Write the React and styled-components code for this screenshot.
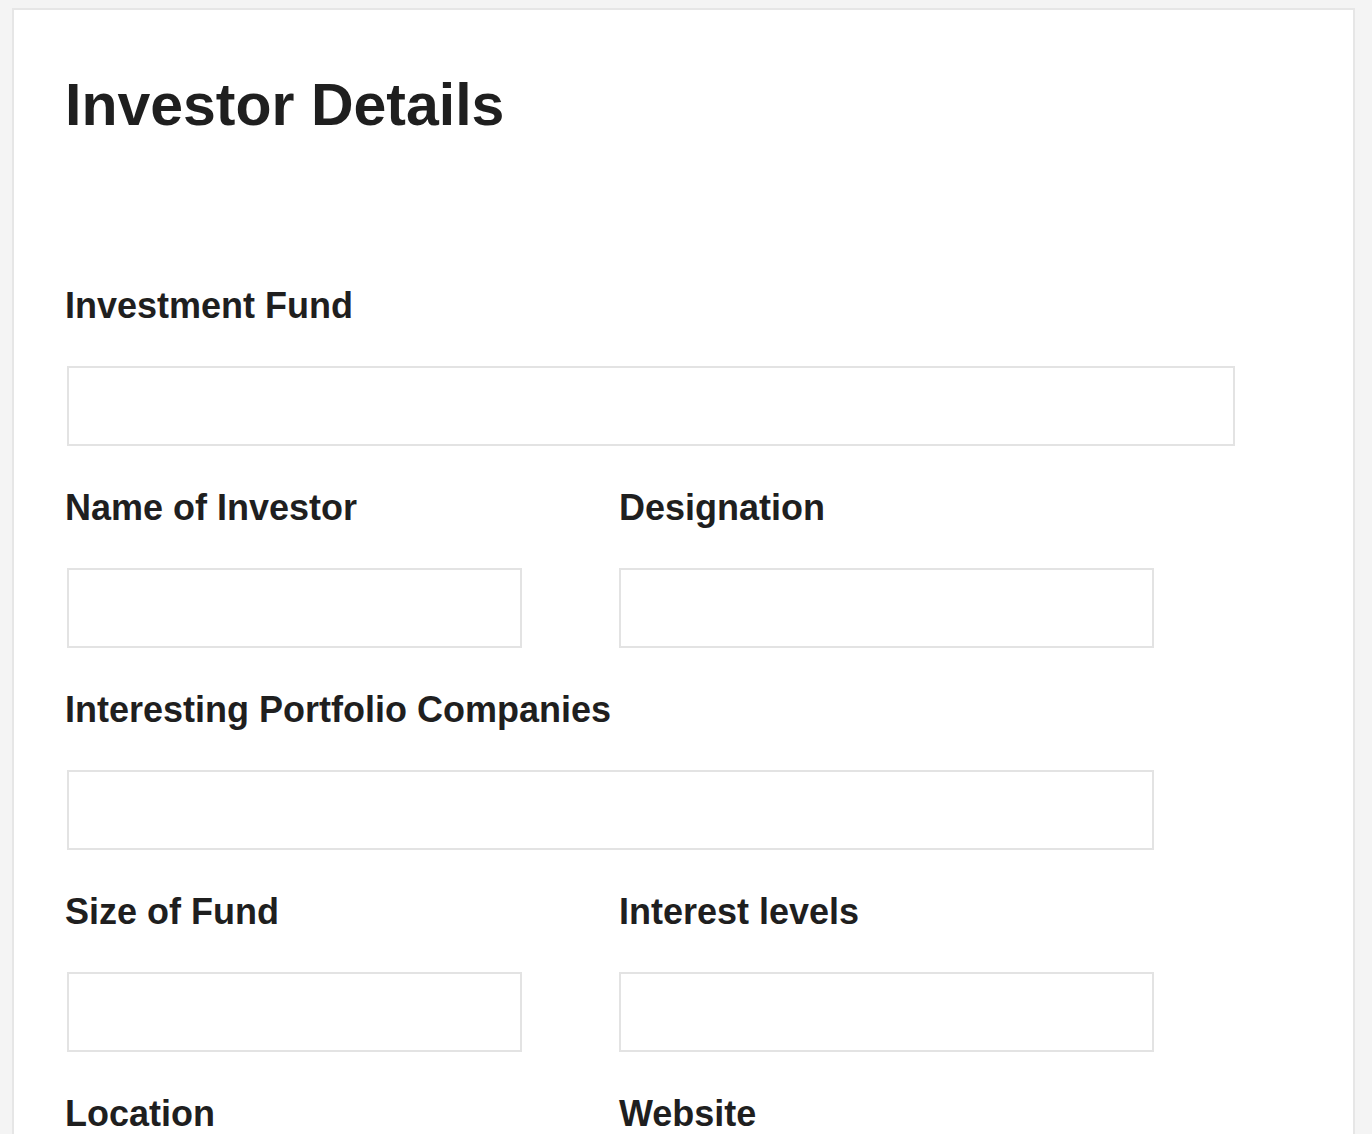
import React from 'react'
import styled, { createGlobalStyle } from 'styled-components'

const GlobalStyle = createGlobalStyle`
  html, body {
    margin: 0;
    padding: 0;
    background: #f4f4f4;
  }
  body {
    font-family: "Liberation Sans", Arial, sans-serif;
    color: #1f1f1f;
  }
`

const Page = styled.div`
  padding: 8px 0 0 12px;
  width: 1343px;
`

const Card = styled.div`
  background: #fff;
  border: 2px solid #e6e6e6;
  border-bottom: none;
  padding: 66px 53px 120px 51px;
  min-height: 1200px;
  box-sizing: border-box;
`

const Title = styled.h1`
  margin: 0 0 151px 0;
  font-size: 59px;
  line-height: 59px;
  font-weight: 700;
  color: #1f1f1f;
`

const Form = styled.div`
  display: grid;
  grid-template-columns: 554px 540px;
  row-gap: 42px;
`

const Field = styled.div`
  display: flex;
  flex-direction: column;
  grid-column: ${(props) => (props.full ? '1 / -1' : 'auto')};
`

const Label = styled.label`
  font-size: 36px;
  line-height: 40px;
  font-weight: 700;
  color: #1f1f1f;
  margin-bottom: 40px;
`

const Input = styled.input`
  box-sizing: border-box;
  width: ${(props) => props.width}px;
  height: 80px;
  margin-left: ${(props) => (props.right ? 0 : 2)}px;
  border: 2px solid #e3e3e3;
  background: #fff;
  outline: none;
  font-size: 28px;
  padding: 0 16px;
`

const fields = [
  { label: 'Investment Fund', full: true, width: 1168 },
  { label: 'Name of Investor', width: 455 },
  { label: 'Designation', width: 535, right: true },
  { label: 'Interesting Portfolio Companies', full: true, width: 1087 },
  { label: 'Size of Fund', width: 455 },
  { label: 'Interest levels', width: 535, right: true },
  { label: 'Location', width: 455 },
  { label: 'Website', width: 535, right: true },
]

export default function App() {
  return (
    <>
      <GlobalStyle />
      <Page>
        <Card>
          <Title>Investor Details</Title>
          <Form>
            {fields.map((f) => (
              <Field key={f.label} full={f.full ? 1 : 0}>
                <Label>{f.label}</Label>
                <Input width={f.width} right={f.right ? 1 : 0} />
              </Field>
            ))}
          </Form>
        </Card>
      </Page>
    </>
  )
}
